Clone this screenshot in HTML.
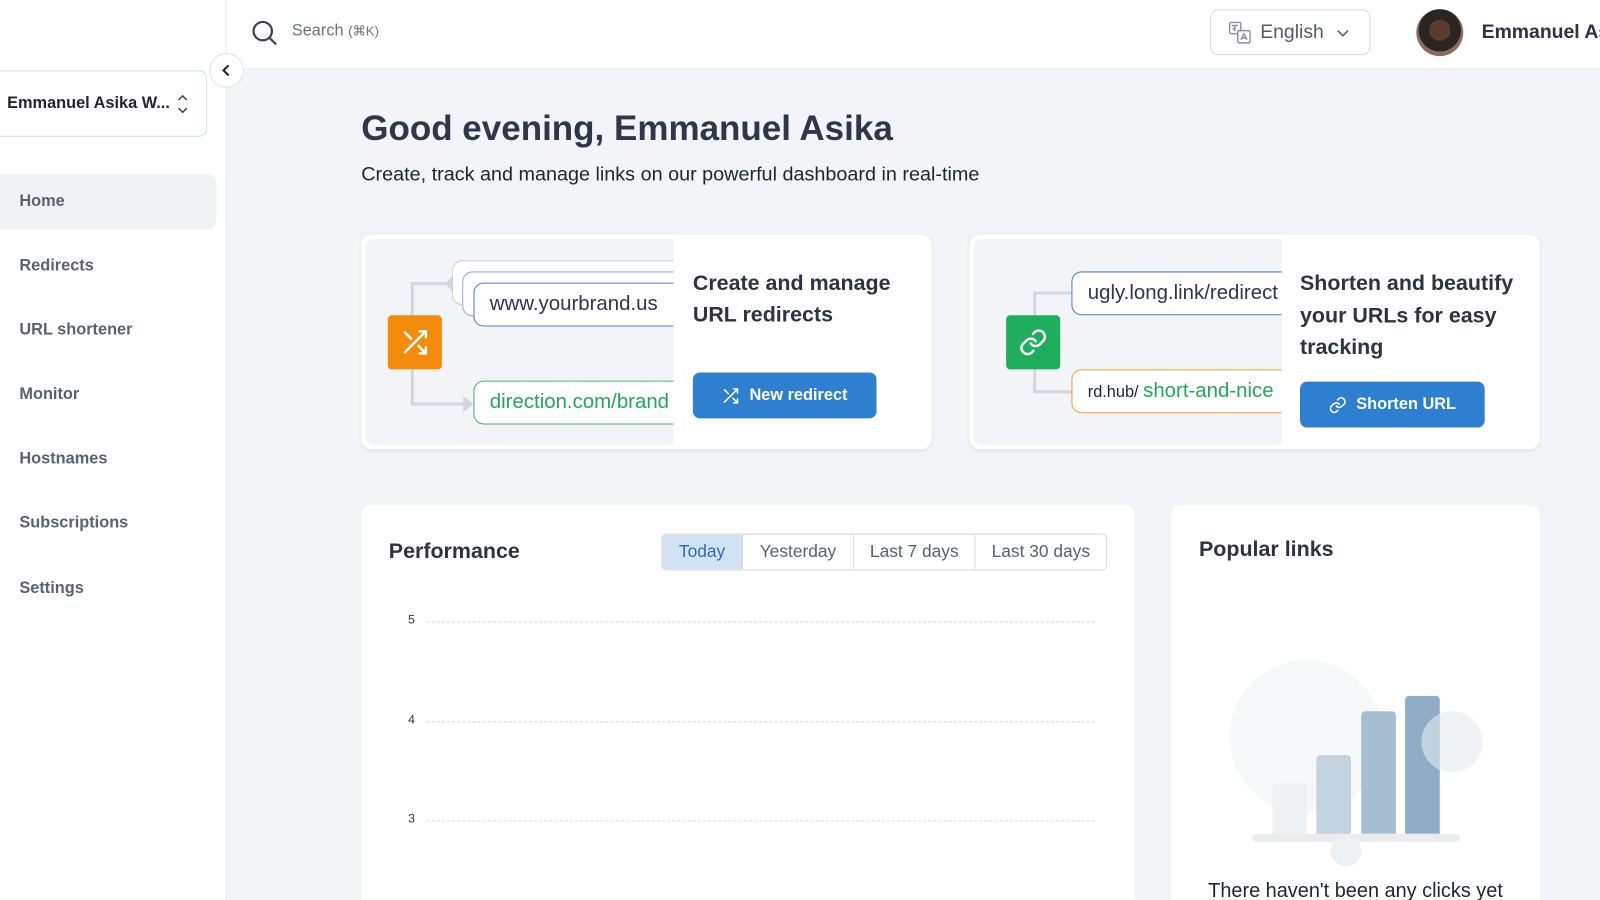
<!DOCTYPE html>
<html><head><meta charset="utf-8"><style>
*{box-sizing:border-box;margin:0;padding:0}
html,body{width:1600px;height:900px;overflow:hidden;background:#f3f4f7}
body{font-family:"Liberation Sans",sans-serif;color:#2d3748}
#w{position:absolute;left:0;top:0;width:1568px;height:882px;transform:scale(1.02041);transform-origin:0 0;overflow:hidden}
.abs{position:absolute}
.side{left:0;top:0;width:222px;height:900px;background:#fff;border-right:1px solid #e6e8ec}
.hdr{left:222px;top:0;width:1378px;height:68px;background:#fff;border-bottom:1px solid #e6e8ec}
.nav{left:19px;font-size:16px;font-weight:bold;color:#5a6270}
.card{background:#fff;border-radius:10px;box-shadow:0 1px 4px rgba(0,0,0,.08)}
.pill{position:absolute;background:#fff;border-radius:10px;font-size:19px;padding-left:15px;line-height:40px;overflow:hidden;white-space:nowrap}
.btn{position:absolute;background:#2f7fd1;color:#fff;border-radius:7px;font-weight:bold;font-size:16px;display:flex;align-items:center;justify-content:center;gap:9px}
.grid{position:absolute;left:418px;width:655px;border-top:1px dashed #d6d9de}
.yl{position:absolute;left:400px;font-size:12px;color:#333}
</style></head><body><div id="w">
<div class="abs side"></div>
<div class="abs hdr"></div>
<svg class="abs" style="left:246px;top:19px" width="26" height="26" viewBox="0 0 26 26"><circle cx="11.5" cy="11.5" r="9" fill="none" stroke="#3a4250" stroke-width="2.2"/><path d="M18 18l6 6" stroke="#3a4250" stroke-width="2.2" stroke-linecap="round"/></svg>
<div class="abs" style="left:286px;top:22px;font-size:16px;color:#6b7280">Search <span style="font-size:13px">(⌘K)</span></div>
<div class="abs" style="left:1186px;top:9px;width:157px;height:45px;border:1px solid #d8dbe0;border-radius:8px"></div>
<svg class="abs" style="left:1203px;top:20px" width="24" height="24" viewBox="0 0 24 24" fill="none" stroke="#8a909a" stroke-width="1.4"><rect x="2" y="2" width="11" height="11" rx="1.5"/><rect x="10" y="10" width="12" height="12" rx="1.5" fill="#fff"/><path d="M13 19l3-6 3 6M14 17h4M4 5h6M7 5v5M5 8l3 2"/></svg>
<div class="abs" style="left:1235px;top:21px;font-size:19px;color:#555b66">English</div>
<svg class="abs" style="left:1308px;top:24px" width="16" height="16" viewBox="0 0 16 16"><path d="M3 6l5 5 5-5" fill="none" stroke="#666" stroke-width="1.6"/></svg>
<div class="abs" style="left:1388px;top:9px;width:46px;height:46px;border-radius:50%;background:radial-gradient(circle at 50% 45%,#5a3b2c 0 30%,#2a2422 31% 60%,#8b6c60 61%)"></div>
<div class="abs" style="left:1452px;top:21px;font-size:19px;font-weight:bold;color:#2d3340;white-space:nowrap">Emmanuel Asika</div>
<div class="abs" style="left:-10px;top:69px;width:213px;height:65px;border:1.5px solid #d3dde9;border-radius:8px;background:#fff"></div>
<div class="abs" style="left:7px;top:93px;font-size:16px;font-weight:bold;color:#1f2530">Emmanuel Asika W...</div>
<svg class="abs" style="left:172px;top:90px" width="14" height="24" viewBox="0 0 14 24"><path d="M3 8l4-4 4 4M3 16l4 4 4-4" fill="none" stroke="#444" stroke-width="1.5"/></svg>
<div class="abs" style="left:205px;top:52px;width:34px;height:34px;border-radius:50%;background:#fff;border:1px solid #dfe2e6"></div>
<svg class="abs" style="left:215px;top:62px" width="14" height="14" viewBox="0 0 14 14"><path d="M9 2L4 7l5 5" fill="none" stroke="#222" stroke-width="2"/></svg>
<div class="abs" style="left:-10px;top:171px;width:222px;height:54px;background:#f1f2f5;border-radius:8px"></div>
<div class="abs nav" style="top:189px">Home</div>
<div class="abs nav" style="top:252px">Redirects</div>
<div class="abs nav" style="top:315px">URL shortener</div>
<div class="abs nav" style="top:378px">Monitor</div>
<div class="abs nav" style="top:441px">Hostnames</div>
<div class="abs nav" style="top:504px">Subscriptions</div>
<div class="abs nav" style="top:568px">Settings</div>
<div class="abs" style="left:354px;top:107px;font-size:34.3px;font-weight:bold;color:#2d3748;white-space:nowrap">Good evening, Emmanuel Asika</div>
<div class="abs" style="left:354px;top:160px;font-size:19.4px;color:#1f2530;white-space:nowrap">Create, track and manage links on our powerful dashboard in real-time</div>
<div class="abs card" style="left:354px;top:230px;width:559px;height:210px;overflow:hidden">
 <div class="abs" style="left:4px;top:4px;width:303px;height:202px;background:#f3f4f7;border-radius:8px 0 0 8px"></div>
 <svg class="abs" style="left:0;top:0" width="120" height="210"><path d="M50 80V48h40M50 132v34h52" fill="none" stroke="#d3d6dc" stroke-width="3"/><path d="M90 40l-8 8 8 8zM100 158l10 8-10 8z" fill="#d3d6dc"/></svg>
 <div class="pill" style="left:89px;top:25px;width:260px;height:44px;border:1.5px solid #c8d0dc"></div>
 <div class="pill" style="left:99px;top:36px;width:260px;height:44px;border:1.5px solid #8fb0d6"></div>
 <div class="pill" style="left:110px;top:47px;width:220px;height:43px;border:1.5px solid #4a83c2;color:#2d3748;font-size:20px">www.yourbrand.us</div>
 <div class="pill" style="left:110px;top:143px;width:220px;height:43px;border:1.5px solid #3cb371;color:#22a85a;font-size:20px">direction.com/brand</div>
 <div class="abs" style="left:306px;top:0;width:253px;height:210px;background:#fff"></div>
 <div class="abs" style="left:26px;top:79px;width:53px;height:53px;background:#f28c0a;border-radius:4px"></div>
 <svg class="abs" style="left:38px;top:91px" width="29" height="29" viewBox="0 0 24 24" fill="none" stroke="#fff" stroke-width="2" stroke-linecap="round"><path d="M16 3h5v5M4 20L21 3M21 16v5h-5M15 15l6 6M4 4l5 5"/></svg>
 <div class="abs" style="left:325px;top:32px;font-size:21px;font-weight:bold;line-height:31px;color:#2d3340">Create and manage<br>URL redirects</div>
 <div class="btn" style="left:325px;top:135px;width:180px;height:45px"><svg width="18" height="18" viewBox="0 0 24 24" fill="none" stroke="#fff" stroke-width="2" stroke-linecap="round"><path d="M16 3h5v5M4 20L21 3M21 16v5h-5M15 15l6 6M4 4l5 5"/></svg>New redirect</div>
</div>
<div class="abs card" style="left:950px;top:230px;width:559px;height:210px;overflow:hidden">
 <div class="abs" style="left:4px;top:4px;width:303px;height:202px;background:#f3f4f7;border-radius:8px 0 0 8px"></div>
 <svg class="abs" style="left:0;top:0" width="120" height="210"><path d="M64 80V57h40M64 132v22h36" fill="none" stroke="#d3d6dc" stroke-width="3"/><path d="M108 49l-8 8 8 8zM100 145l10 8-10 8z" fill="#d3d6dc"/></svg>
 <div class="pill" style="left:100px;top:36px;width:230px;height:43px;border:1.5px solid #4a83c2;color:#2d3748;font-size:20px">ugly.long.link/redirect</div>
 <div class="pill" style="left:100px;top:132px;width:230px;height:43px;border:1.5px solid #f0a030;color:#1f2530;font-size:16px">rd.hub/ <span style="color:#22a85a;font-size:20px">short-and-nice</span></div>
 <div class="abs" style="left:306px;top:0;width:253px;height:210px;background:#fff"></div>
 <div class="abs" style="left:36px;top:79px;width:53px;height:53px;background:#1fae5d;border-radius:4px"></div>
 <svg class="abs" style="left:48px;top:91px" width="29" height="29" viewBox="0 0 24 24" fill="none" stroke="#fff" stroke-width="2" stroke-linecap="round"><path d="M10 13a5 5 0 007.5.5l3-3a5 5 0 00-7-7l-1.7 1.7"/><path d="M14 11a5 5 0 00-7.5-.5l-3 3a5 5 0 007 7l1.7-1.7"/></svg>
 <div class="abs" style="left:324px;top:32px;font-size:21px;font-weight:bold;line-height:31.5px;color:#2d3340">Shorten and beautify<br>your URLs for easy<br>tracking</div>
 <div class="btn" style="left:324px;top:144px;width:181px;height:45px"><svg width="18" height="18" viewBox="0 0 24 24" fill="none" stroke="#fff" stroke-width="2" stroke-linecap="round"><path d="M10 13a5 5 0 007.5.5l3-3a5 5 0 00-7-7l-1.7 1.7"/><path d="M14 11a5 5 0 00-7.5-.5l-3 3a5 5 0 007 7l1.7-1.7"/></svg>Shorten URL</div>
</div>
<div class="abs" style="left:354px;top:495px;width:758px;height:420px;background:#fff;border-radius:10px"></div>
<div class="abs" style="left:381px;top:529px;font-size:21px;font-weight:bold;color:#2d3340">Performance</div>
<div class="abs" style="left:648px;top:523px;height:36px;display:flex;border:1px solid #d6d9de;border-radius:5px;overflow:hidden;font-size:17px;color:#59606b">
 <div style="width:79px;background:#d2e2f3;color:#2a6bb5;text-align:center;line-height:34px;border-right:1px solid #d6d9de">Today</div>
 <div style="width:109px;text-align:center;line-height:34px;border-right:1px solid #d6d9de">Yesterday</div>
 <div style="width:119px;text-align:center;line-height:34px;border-right:1px solid #d6d9de">Last 7 days</div>
 <div style="width:128px;text-align:center;line-height:34px">Last 30 days</div>
</div>
<div class="yl" style="top:600px">5</div><div class="grid" style="top:609px"></div>
<div class="yl" style="top:698px">4</div><div class="grid" style="top:707px"></div>
<div class="yl" style="top:795px">3</div><div class="grid" style="top:804px"></div>
<div class="abs" style="left:1148px;top:495px;width:361px;height:420px;background:#fff;border-radius:10px"></div>
<div class="abs" style="left:1175px;top:527px;font-size:21px;font-weight:bold;color:#2d3340">Popular links</div>
<svg class="abs" style="left:1150px;top:600px" width="360" height="260">
 <circle cx="130" cy="122" r="75" fill="#f7f8fa"/>
 <rect x="97" y="168" width="34" height="52" rx="4" fill="#eef2f5"/>
 <rect x="140" y="140" width="34" height="80" rx="4" fill="#c3d3df"/>
 <rect x="184" y="97" width="34" height="123" rx="4" fill="#a7bed1"/>
 <rect x="227" y="82" width="34" height="138" rx="4" fill="#8fadc6"/>
 <circle cx="273" cy="127" r="30" fill="#e5ebf0" opacity=".6"/>
 <rect x="77" y="217" width="204" height="8" rx="4" fill="#ebeced"/>
 <circle cx="169" cy="234" r="15" fill="#eef1f3"/>
</svg>
<div class="abs" style="left:1184px;top:862px;font-size:19.5px;color:#1f2530;white-space:nowrap">There haven't been any clicks yet</div>
</div></body></html>
